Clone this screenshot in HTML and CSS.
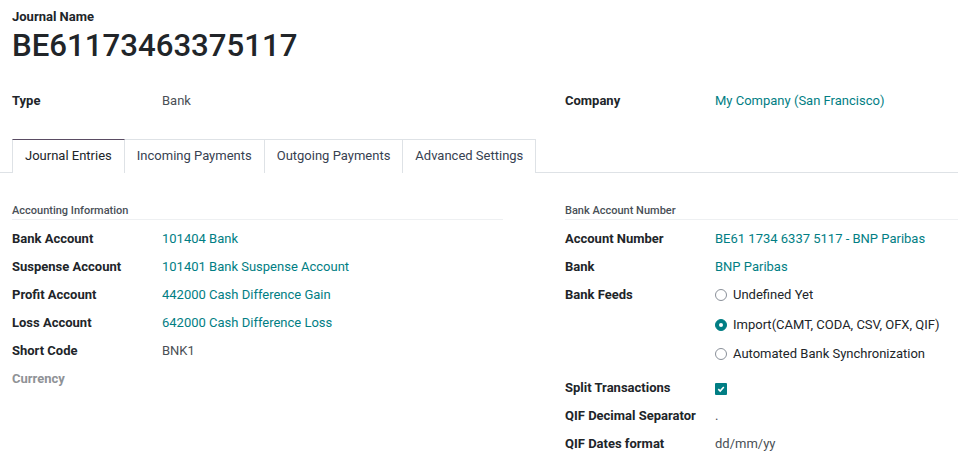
FILE: index.html
```html
<!DOCTYPE html>
<html>
<head>
<meta charset="utf-8">
<link rel="stylesheet" href="styles.css">
</head>
<body>
<div class="sheet">
  <div class="title-block">
    <div class="title-label">Journal Name</div>
    <h1 class="title">BE61173463375117</h1>
  </div>
  <div class="cols top-cols">
    <div class="group">
      <div class="row"><div class="lbl">Type</div><div class="val">Bank</div></div>
    </div>
    <div class="group">
      <div class="row"><div class="lbl">Company</div><div class="val link">My Company (San Francisco)</div></div>
    </div>
  </div>
</div>
<div class="tabs">
  <div class="tab active">Journal Entries</div>
  <div class="tab">Incoming Payments</div>
  <div class="tab">Outgoing Payments</div>
  <div class="tab">Advanced Settings</div>
</div>
<div class="sheet">
  <div class="cols">
    <div class="group">
      <div class="sec">Accounting Information</div>
      <div class="row"><div class="lbl">Bank Account</div><div class="val link">101404 Bank</div></div>
      <div class="row"><div class="lbl">Suspense Account</div><div class="val link">101401 Bank Suspense Account</div></div>
      <div class="row"><div class="lbl">Profit Account</div><div class="val link">442000 Cash Difference Gain</div></div>
      <div class="row"><div class="lbl">Loss Account</div><div class="val link">642000 Cash Difference Loss</div></div>
      <div class="row"><div class="lbl">Short Code</div><div class="val">BNK1</div></div>
      <div class="row"><div class="lbl muted">Currency</div><div class="val"></div></div>
    </div>
    <div class="group">
      <div class="sec">Bank Account Number</div>
      <div class="row"><div class="lbl">Account Number</div><div class="val link">BE61 1734 6337 5117 - BNP Paribas</div></div>
      <div class="row"><div class="lbl">Bank</div><div class="val link">BNP Paribas</div></div>
      <div class="row feeds"><div class="lbl">Bank Feeds</div>
        <div class="radios">
          <div class="radio"><span class="dot"></span>Undefined Yet</div>
          <div class="radio"><span class="dot on"></span>Import(CAMT, CODA, CSV, OFX, QIF)</div>
          <div class="radio"><span class="dot"></span>Automated Bank Synchronization</div>
        </div>
      </div>
      <div class="row split"><div class="lbl">Split Transactions</div><div class="val"><span class="check"><svg width="8" height="8" viewBox="0 0 8 8"><path d="M1.3 4.2 L3.2 6 L6.8 2" fill="none" stroke="#fff" stroke-width="1.6"/></svg></span></div></div>
      <div class="row"><div class="lbl">QIF Decimal Separator</div><div class="val">.</div></div>
      <div class="row"><div class="lbl">QIF Dates format</div><div class="val">dd/mm/yy</div></div>
    </div>
  </div>
</div>
</body>
</html>
```
FILE: styles.css
```css
* { box-sizing: border-box; }
body {
  margin: 0;
  font-family: Roboto, "Noto Sans", sans-serif;
  font-size: 13px;
  color: #212529;
  background: #fff;
}
.sheet { padding: 0 0 0 12px; }
.title-block { padding-top: 7px; }
.title-label { font-weight: 700; line-height: 20px; }
.title {
  margin: 0;
  font-size: 31.2px;
  font-weight: 500;
  line-height: 38px;
  color: #212529;
}
.cols {
  display: grid;
  grid-template-columns: 491px 1fr;
  column-gap: 62px;
}
.top-cols { margin-top: 22px; }
.row {
  display: grid;
  grid-template-columns: 150px 1fr;
  line-height: 20px;
  padding: 4px 0;
}
.lbl { font-weight: 700; color: #212529; }
.lbl.muted { color: #8f9296; font-weight: 700; }
.val { color: #4a4f55; }
.val.link { color: #017e84; }
.tabs {
  display: flex;
  margin-top: 24px;
  padding-left: 12px;
  border-bottom: 1px solid #dee2e6;
}
.tab {
  line-height: 20px;
  padding: 6px 12px 5px 12px;
  height: 34px;
  border: 1px solid #dee2e6;
  border-left: none;
  border-bottom: none;
  color: #374151;
  margin-bottom: -1px;
  background: #fff;
}
.tab:first-child { border-left: 1px solid #dee2e6; }
.tab.active {
  border-top: 1px solid #5a4c63;
  color: #212529;
  height: 34px;
  padding-top: 6px;
}
.sec {
  margin-top: 30px;
  font-size: 11px;
  font-weight: 500;
  line-height: 16px;
  color: #495057;
  border-bottom: 1px solid #eef0f2;
  margin-bottom: 5px;
  height: 17px;
}
.radios { display: flex; flex-direction: column; }
.feeds { padding: 0; }
.radio {
  display: flex;
  align-items: center;
  line-height: 20px;
  padding: 4px 0 5.5px;
  color: #212529;
}
.feeds .lbl { padding-top: 4px; }
.dot {
  width: 12px;
  height: 12px;
  border: 1px solid #8a9099;
  border-radius: 50%;
  margin-right: 6px;
  background: #fff;
  flex: none;
}
.dot.on {
  background: #017e84;
  border-color: #017e84;
  position: relative;
}
.dot.on::after {
  content: "";
  position: absolute;
  left: 3px; top: 3px;
  width: 4px; height: 4px;
  border-radius: 50%;
  background: #fff;
}
.split { margin-top: 4px; }
.check {
  display: inline-flex;
  align-items: center;
  justify-content: center;
  width: 12px;
  height: 12px;
  background: #017e84;
  border-radius: 1px;
  vertical-align: -1px;
}
```
